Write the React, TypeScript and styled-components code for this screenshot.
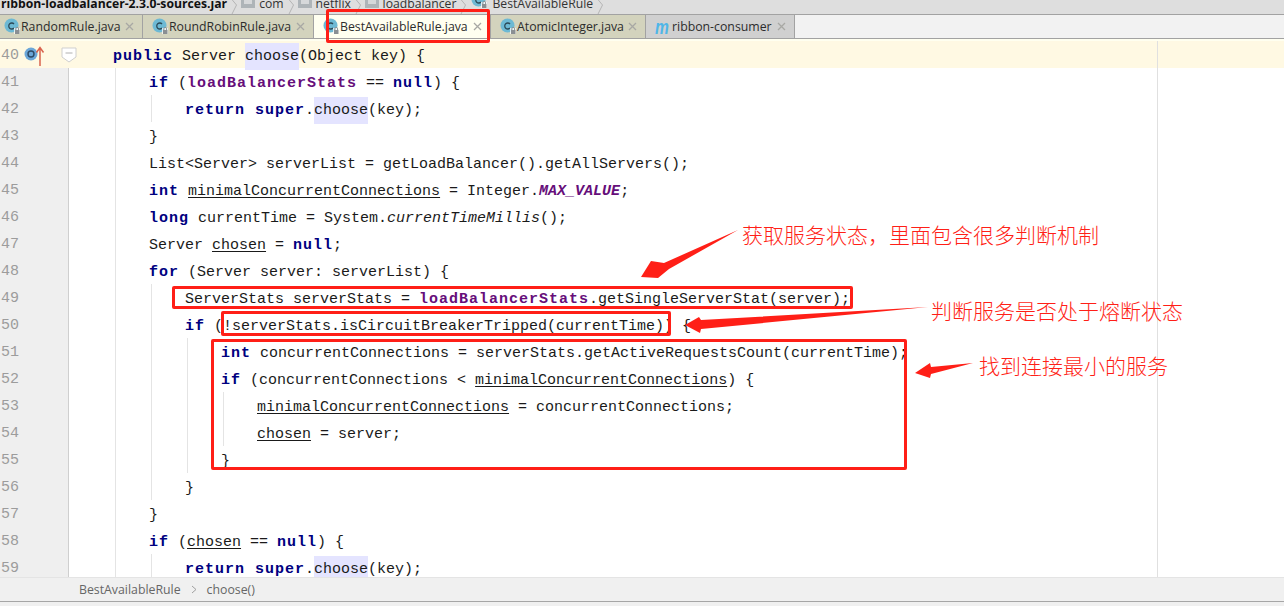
import React from "react";
import styled, { createGlobalStyle } from "styled-components";

const GlobalStyle = createGlobalStyle`
  html, body {
    margin: 0;
    padding: 0;
    background: #fff;
  }
`;

const RED = "#ff1f17";

const Page = styled.div`
  position: relative;
  width: 1284px;
  height: 606px;
  overflow: hidden;
  display: flex;
  flex-direction: column;
  background: #f0f0f0;
`;

const CrumbBar = styled.div`
  flex: none;
  height: 14px;
  display: flex;
  align-items: flex-start;
  gap: 4px;
  padding-left: 1px;
  overflow: hidden;
  background: #dedede;
  font-family: "Open Sans", "Noto Sans", sans-serif;
  font-size: 12.2px;
  color: #333;
  white-space: nowrap;
`;

const Crumb = styled.span<{ $width?: number }>`
  flex: none;
  width: ${(p) => (p.$width ? `${p.$width}px` : "auto")};
  line-height: 14px;
  margin-top: -3px;
`;

const CrumbJar = styled(Crumb)`
  font-weight: 700;
  color: #111;
`;

const FolderWrap = styled.span`
  display: inline-flex;
  flex: none;
  margin-top: -4px;
`;

const IconWrap = styled.span`
  display: inline-flex;
  flex: none;
`;

const CrumbIcon = styled.span`
  display: inline-flex;
  flex: none;
  margin: -8px 0 0 1px;
`;

const TabBar = styled.div`
  flex: none;
  height: 25px;
  box-sizing: border-box;
  display: flex;
  background: #f2f2f2;
  border-top: 1px solid #a2a2a2;
  border-bottom: 1px solid #a2a2a2;
`;

const Tab = styled.div<{ $width: number; $bg: string; $pad?: number }>`
  box-sizing: border-box;
  width: ${(p) => p.$width}px;
  display: flex;
  align-items: center;
  justify-content: space-between;
  padding: 0 8px 0 ${(p) => p.$pad ?? 9}px;
  background: ${(p) => p.$bg};
  border-right: 1px solid #a2a2a2;
  font-family: "Open Sans", "Noto Sans", sans-serif;
  font-size: 12.3px;
  color: #2c2c2c;
`;

const TabLabel = styled.span`
  display: flex;
  align-items: center;
  white-space: nowrap;
`;

const MavenMark = styled.span`
  width: 17px;
  font-family: "Liberation Sans", sans-serif;
  font-size: 20px;
  line-height: 20px;
  font-weight: 700;
  font-style: italic;
  color: #4fb6e8;
  transform: scaleX(0.78);
  transform-origin: left center;
`;

const TabStrip = styled.div`
  flex: none;
  height: 2px;
  background: #fffff0;
`;

const Editor = styled.div`
  position: relative;
  flex: none;
  height: 536px;
  overflow: hidden;
  background: #fff;
`;

const Row = styled.div<{ $active?: boolean }>`
  display: flex;
  height: 27px;
  background: ${(p) => (p.$active ? "#fff9e3" : "transparent")};
`;

const LineNo = styled.div<{ $active?: boolean }>`
  flex: none;
  box-sizing: border-box;
  width: 69px;
  padding: 1px 0 0 1px;
  background: ${(p) => (p.$active ? "#fff9e3" : "#efefef")};
  border-right: 1px solid ${(p) => (p.$active ? "#fff9e3" : "#cfcfcf")};
  font-family: "Liberation Mono", monospace;
  font-size: 15px;
  line-height: 27px;
  color: #9c9c9c;
`;

const Code = styled.div<{ $indent: number; $guides: number[] }>`
  flex: 1;
  box-sizing: border-box;
  height: 27px;
  padding-top: 2px;
  padding-left: ${(p) => 8 + p.$indent * 9}px;
  font-family: "Liberation Mono", monospace;
  font-size: 15px;
  line-height: 27px;
  color: #1a1a1a;
  white-space: pre;
  background-repeat: no-repeat;
  background-size: 1px 100%;
  background-image: ${(p) =>
    p.$guides.length
      ? p.$guides.map(() => "linear-gradient(#e4e4e4, #e4e4e4)").join(", ")
      : "none"};
  background-position: ${(p) => p.$guides.map((g) => `${g}px 0`).join(", ") || "0 0"};
`;

const Kw = styled.span`
  font-weight: 700;
  letter-spacing: 1px;
  color: #000080;
`;

const Field = styled.span`
  font-weight: 700;
  letter-spacing: 1px;
  color: #660e7a;
`;

const StaticField = styled(Field)`
  font-style: italic;
  letter-spacing: 0;
`;

const StaticCall = styled.span`
  font-style: italic;
`;

const Reassigned = styled.span`
  text-decoration: underline;
  text-underline-offset: 2px;
`;

const Hit = styled.span`
  background: #e4e4ff;
  padding: 5px 0;
`;

const OverrideMark = styled.div`
  position: absolute;
  left: 24px;
  top: 5px;
  line-height: 0;
`;

const FoldMark = styled.div`
  position: absolute;
  left: 61px;
  top: 6px;
  line-height: 0;
`;

const MarginLine = styled.div`
  position: absolute;
  left: 1157px;
  top: 0;
  bottom: 0;
  width: 1px;
  background: #e0e0e0;
`;

const StatusBar = styled.div`
  flex: none;
  height: 25px;
  box-sizing: border-box;
  display: flex;
  align-items: center;
  gap: 10px;
  padding-left: 79px;
  background: #f0f0f0;
  border-top: 1px solid #e4e4e4;
  border-bottom: 1px solid #a6a6a6;
`;

const StatusText = styled.span`
  font-family: "Open Sans", "Noto Sans", sans-serif;
  font-size: 12.3px;
  color: #666;
`;

const RedBox = styled.div<{ $left: number; $top: number; $width: number; $height: number }>`
  position: absolute;
  box-sizing: border-box;
  left: ${(p) => p.$left}px;
  top: ${(p) => p.$top}px;
  width: ${(p) => p.$width}px;
  height: ${(p) => p.$height}px;
  border: 3px solid ${RED};
  border-radius: 2px;
`;

const ArrowLayer = styled.svg`
  position: absolute;
  left: 0;
  top: 0;
`;

const Note = styled.div<{ $left: number; $top: number }>`
  position: absolute;
  left: ${(p) => p.$left}px;
  top: ${(p) => p.$top}px;
  font-family: "Noto Sans CJK SC", sans-serif;
  font-size: 21px;
  line-height: 28px;
  font-weight: 300;
  color: ${RED};
  white-space: nowrap;
`;

const ClassIcon = () => (
  <IconWrap>
    <svg width="17" height="17" viewBox="0 0 17 17">
      <circle cx="7.5" cy="7.5" r="7" fill="#6db9d4" />
      <path d="M10 6 A3 3 0 1 0 10 10" fill="none" stroke="#2b4a58" strokeWidth="1.3" />
      <rect x="10" y="10" width="6" height="6" fill="#fff" opacity="0.75" />
      <rect x="11" y="12" width="4.5" height="4" fill="#8a8f93" />
      <path d="M11.8 12 V10.8 a1.4 1.4 0 0 1 2.8 0 V12" fill="none" stroke="#8a8f93" strokeWidth="1" />
    </svg>
  </IconWrap>
);

const CloseIcon = () => (
  <svg width="9" height="9" viewBox="0 0 9 9">
    <path d="M1 1 L8 8 M8 1 L1 8" stroke="#a8a8a4" strokeWidth="1.3" />
  </svg>
);

const FolderIcon = () => (
  <FolderWrap>
    <svg width="14" height="12" viewBox="0 0 14 12">
      <rect x="0" y="0" width="14" height="12" fill="#aeb4b8" />
      <rect x="3" y="2" width="8" height="6" fill="#d6d8da" />
    </svg>
  </FolderWrap>
);

const Chevron = () => (
  <svg width="6" height="14" viewBox="0 0 6 14">
    <path d="M0.5 -1 L5.5 5 L0.5 15" fill="none" stroke="#b4b4b4" strokeWidth="1" />
  </svg>
);

const Crumbs = () => (
  <CrumbBar>
    <CrumbJar>ribbon-loadbalancer-2.3.0-sources.jar</CrumbJar>
    <Chevron />
    <FolderIcon />
    <Crumb>com</Crumb>
    <Chevron />
    <FolderIcon />
    <Crumb $width={35}>netflix</Crumb>
    <Chevron />
    <FolderIcon />
    <Crumb>loadbalancer</Crumb>
    <Chevron />
    <CrumbIcon>
      <ClassIcon />
    </CrumbIcon>
    <Crumb>BestAvailableRule</Crumb>
    <Chevron />
  </CrumbBar>
);

const Tabs = () => (
  <TabBar>
    <Tab $width={143} $bg="#d3d3bd" $pad={4}>
      <TabLabel>
        <ClassIcon />
        RandomRule.java
      </TabLabel>
      <CloseIcon />
    </Tab>
    <Tab $width={171} $bg="#d3d3bd">
      <TabLabel>
        <ClassIcon />
        RoundRobinRule.java
      </TabLabel>
      <CloseIcon />
    </Tab>
    <Tab $width={177} $bg="#fffff0">
      <TabLabel>
        <ClassIcon />
        BestAvailableRule.java
      </TabLabel>
      <CloseIcon />
    </Tab>
    <Tab $width={155} $bg="#d3d3bd">
      <TabLabel>
        <ClassIcon />
        AtomicInteger.java
      </TabLabel>
      <CloseIcon />
    </Tab>
    <Tab $width={149} $bg="#d0d0d0">
      <TabLabel>
        <MavenMark>m</MavenMark>
        ribbon-consumer
      </TabLabel>
      <CloseIcon />
    </Tab>
  </TabBar>
);

type Line = {
  no: number;
  indent: number;
  guides: number[];
  active?: boolean;
  code: React.ReactNode;
};

const LINES: Line[] = [
  {
    no: 40,
    indent: 4,
    guides: [],
    active: true,
    code: (
      <>
        <Kw>public</Kw> Server <Hit>choose</Hit>(Object key) {"{"}
      </>
    ),
  },
  {
    no: 41,
    indent: 8,
    guides: [46],
    code: (
      <>
        <Kw>if</Kw> (<Field>loadBalancerStats</Field> == <Kw>null</Kw>) {"{"}
      </>
    ),
  },
  {
    no: 42,
    indent: 12,
    guides: [46, 82],
    code: (
      <>
        <Kw>return super</Kw>.<Hit>choose</Hit>(key);
      </>
    ),
  },
  { no: 43, indent: 8, guides: [46], code: "}" },
  {
    no: 44,
    indent: 8,
    guides: [46],
    code: "List<Server> serverList = getLoadBalancer().getAllServers();",
  },
  {
    no: 45,
    indent: 8,
    guides: [46],
    code: (
      <>
        <Kw>int</Kw> <Reassigned>minimalConcurrentConnections</Reassigned> = Integer.<StaticField>MAX_VALUE</StaticField>;
      </>
    ),
  },
  {
    no: 46,
    indent: 8,
    guides: [46],
    code: (
      <>
        <Kw>long</Kw> currentTime = System.<StaticCall>currentTimeMillis</StaticCall>();
      </>
    ),
  },
  {
    no: 47,
    indent: 8,
    guides: [46],
    code: (
      <>
        Server <Reassigned>chosen</Reassigned> = <Kw>null</Kw>;
      </>
    ),
  },
  {
    no: 48,
    indent: 8,
    guides: [46],
    code: (
      <>
        <Kw>for</Kw> (Server server: serverList) {"{"}
      </>
    ),
  },
  {
    no: 49,
    indent: 12,
    guides: [46, 82],
    code: (
      <>
        ServerStats serverStats = <Field>loadBalancerStats</Field>.getSingleServerStat(server);
      </>
    ),
  },
  {
    no: 50,
    indent: 12,
    guides: [46, 82],
    code: (
      <>
        <Kw>if</Kw> (!serverStats.isCircuitBreakerTripped(currentTime)) {"{"}
      </>
    ),
  },
  {
    no: 51,
    indent: 16,
    guides: [46, 82, 118],
    code: (
      <>
        <Kw>int</Kw> concurrentConnections = serverStats.getActiveRequestsCount(currentTime);
      </>
    ),
  },
  {
    no: 52,
    indent: 16,
    guides: [46, 82, 118],
    code: (
      <>
        <Kw>if</Kw> (concurrentConnections {"<"} <Reassigned>minimalConcurrentConnections</Reassigned>) {"{"}
      </>
    ),
  },
  {
    no: 53,
    indent: 20,
    guides: [46, 82, 118, 154],
    code: (
      <>
        <Reassigned>minimalConcurrentConnections</Reassigned> = concurrentConnections;
      </>
    ),
  },
  {
    no: 54,
    indent: 20,
    guides: [46, 82, 118, 154],
    code: (
      <>
        <Reassigned>chosen</Reassigned> = server;
      </>
    ),
  },
  { no: 55, indent: 16, guides: [46, 82, 118], code: "}" },
  { no: 56, indent: 12, guides: [46, 82], code: "}" },
  { no: 57, indent: 8, guides: [46], code: "}" },
  {
    no: 58,
    indent: 8,
    guides: [46],
    code: (
      <>
        <Kw>if</Kw> (<Reassigned>chosen</Reassigned> == <Kw>null</Kw>) {"{"}
      </>
    ),
  },
  {
    no: 59,
    indent: 12,
    guides: [46, 82],
    code: (
      <>
        <Kw>return super</Kw>.<Hit>choose</Hit>(key);
      </>
    ),
  },
];

const Annotations = () => (
  <>
    <RedBox $left={326} $top={9} $width={164} $height={34} />
    <RedBox $left={172} $top={286} $width={681} $height={23} />
    <RedBox $left={221} $top={311} $width={450} $height={25} />
    <RedBox $left={211} $top={339} $width={696} $height={131} />
    <ArrowLayer width="1284" height="606" viewBox="0 0 1284 606">
      <polygon points="738,230 664,263 651,261 641,277 658,278 669,269" fill={RED} />
      <polygon points="928,307 701,320 699,317 685,325 700,333 701,329" fill={RED} />
      <polygon points="973,363 931,367 930,363 915,373 930,378 931,374" fill={RED} />
    </ArrowLayer>
    <Note $left={742} $top={220}>获取服务状态，里面包含很多判断机制</Note>
    <Note $left={931} $top={296}>判断服务是否处于熔断状态</Note>
    <Note $left={979} $top={351}>找到连接最小的服务</Note>
  </>
);

export default function App() {
  return (
    <>
      <GlobalStyle />
      <Page>
        <Crumbs />
        <Tabs />
        <TabStrip />
        <Editor>
          {LINES.map((line) => (
            <Row key={line.no} $active={line.active}>
              <LineNo $active={line.active}>{line.no}</LineNo>
              <Code $indent={line.indent} $guides={line.guides}>
                {line.code}
              </Code>
            </Row>
          ))}
          <MarginLine />
          <OverrideMark>
            <svg width="21" height="20" viewBox="0 0 21 20">
              <circle cx="7" cy="8" r="6.5" fill="#6ba6d8" />
              <circle cx="7" cy="8" r="3" fill="none" stroke="#2d4a66" strokeWidth="1.4" />
              <path d="M16 20 V3 M12.5 6.5 L16 1.5 L19.5 6.5" fill="none" stroke="#d9634f" strokeWidth="1.5" />
            </svg>
          </OverrideMark>
          <FoldMark>
            <svg width="16" height="16" viewBox="0 0 16 16">
              <path d="M1 1 H15 V10 L8 15 L1 10 Z" fill="#fff" stroke="#cfcfcf" />
              <path d="M4.5 6 H11.5" stroke="#b0b0b0" />
            </svg>
          </FoldMark>
        </Editor>
        <StatusBar>
          <StatusText>BestAvailableRule</StatusText>
          <svg width="6" height="9" viewBox="0 0 6 9">
            <path d="M1 1 L5 4.5 L1 8" fill="none" stroke="#a0a0a0" />
          </svg>
          <StatusText>choose()</StatusText>
        </StatusBar>
        <Annotations />
      </Page>
    </>
  );
}
